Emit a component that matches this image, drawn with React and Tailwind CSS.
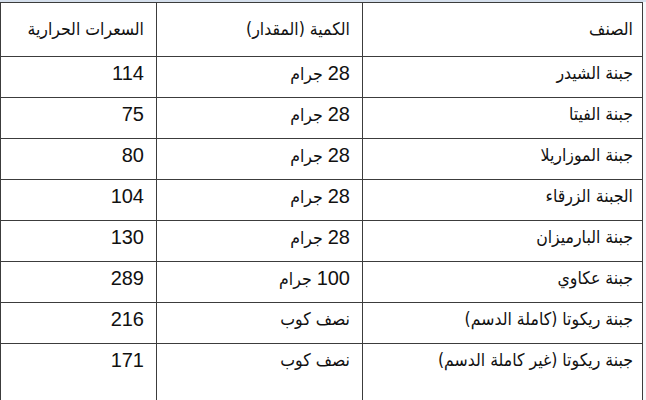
import React from "react";

const rows = [
  ["جبنة الشيدر", "28 جرام", "114"],
  ["جبنة الفيتا", "28 جرام", "75"],
  ["جبنة الموزاريلا", "28 جرام", "80"],
  ["الجبنة الزرقاء", "28 جرام", "104"],
  ["جبنة البارميزان", "28 جرام", "130"],
  ["جبنة عكاوي", "100 جرام", "289"],
  ["جبنة ريكوتا (كاملة الدسم)", "نصف كوب", "216"],
  ["جبنة ريكوتا (غير كاملة الدسم)", "نصف كوب", "171"],
];

// digits in an Arial-like face, Arabic in a condensed face
const Txt = ({ children }) =>
  children.split(/(\d+)/).map((part, i) =>
    /^\d+$/.test(part) ? (
      <span key={i} className="text-[20px]" style={{ fontFamily: '"Liberation Sans", sans-serif' }}>
        {part}
      </span>
    ) : (
      <span key={i}>{part}</span>
    )
  );

const App = () => {
  return (
    <div
      className="w-[646px] h-[400px] overflow-hidden bg-[#f7f9fc] text-[#111] text-[17.5px] leading-[23px]"
      style={{ fontFamily: '"DejaVu Sans Condensed", "DejaVu Sans", sans-serif' }}
    >
      <div className="h-[2px] bg-[#d5dfec]" />
      <div dir="rtl" className="w-[643px] bg-white border-x border-t border-[#3c3c3c]">
        {/* header */}
        <div className="grid grid-cols-[280px_206px_155px] h-[54px] border-b border-[#3c3c3c] whitespace-nowrap">
          <div className="border-l border-[#3c3c3c] flex items-center pr-[9px]">الصنف</div>
          <div className="border-l border-[#3c3c3c] flex items-center pr-[12px]">الكمية (المقدار)</div>
          <div className="flex items-center pr-[12px]">السعرات الحرارية</div>
        </div>

        {rows.map((r, i) => {
          const last = i === rows.length - 1;
          return (
            <div
              key={i}
              className={
                last
                  ? "grid grid-cols-[280px_206px_155px] h-[60px] whitespace-nowrap"
                  : "grid grid-cols-[280px_206px_155px] h-[41px] border-b border-[#3c3c3c] whitespace-nowrap"
              }
            >
              <div className="border-l border-[#3c3c3c] pt-[5px] pr-[9px]">
                <Txt>{r[0]}</Txt>
              </div>
              <div className="border-l border-[#3c3c3c] pt-[5px] pr-[12px]">
                <Txt>{r[1]}</Txt>
              </div>
              <div className="pt-[5px] pr-[12px]">
                <Txt>{r[2]}</Txt>
              </div>
            </div>
          );
        })}
      </div>
    </div>
  );
};

export default App;
